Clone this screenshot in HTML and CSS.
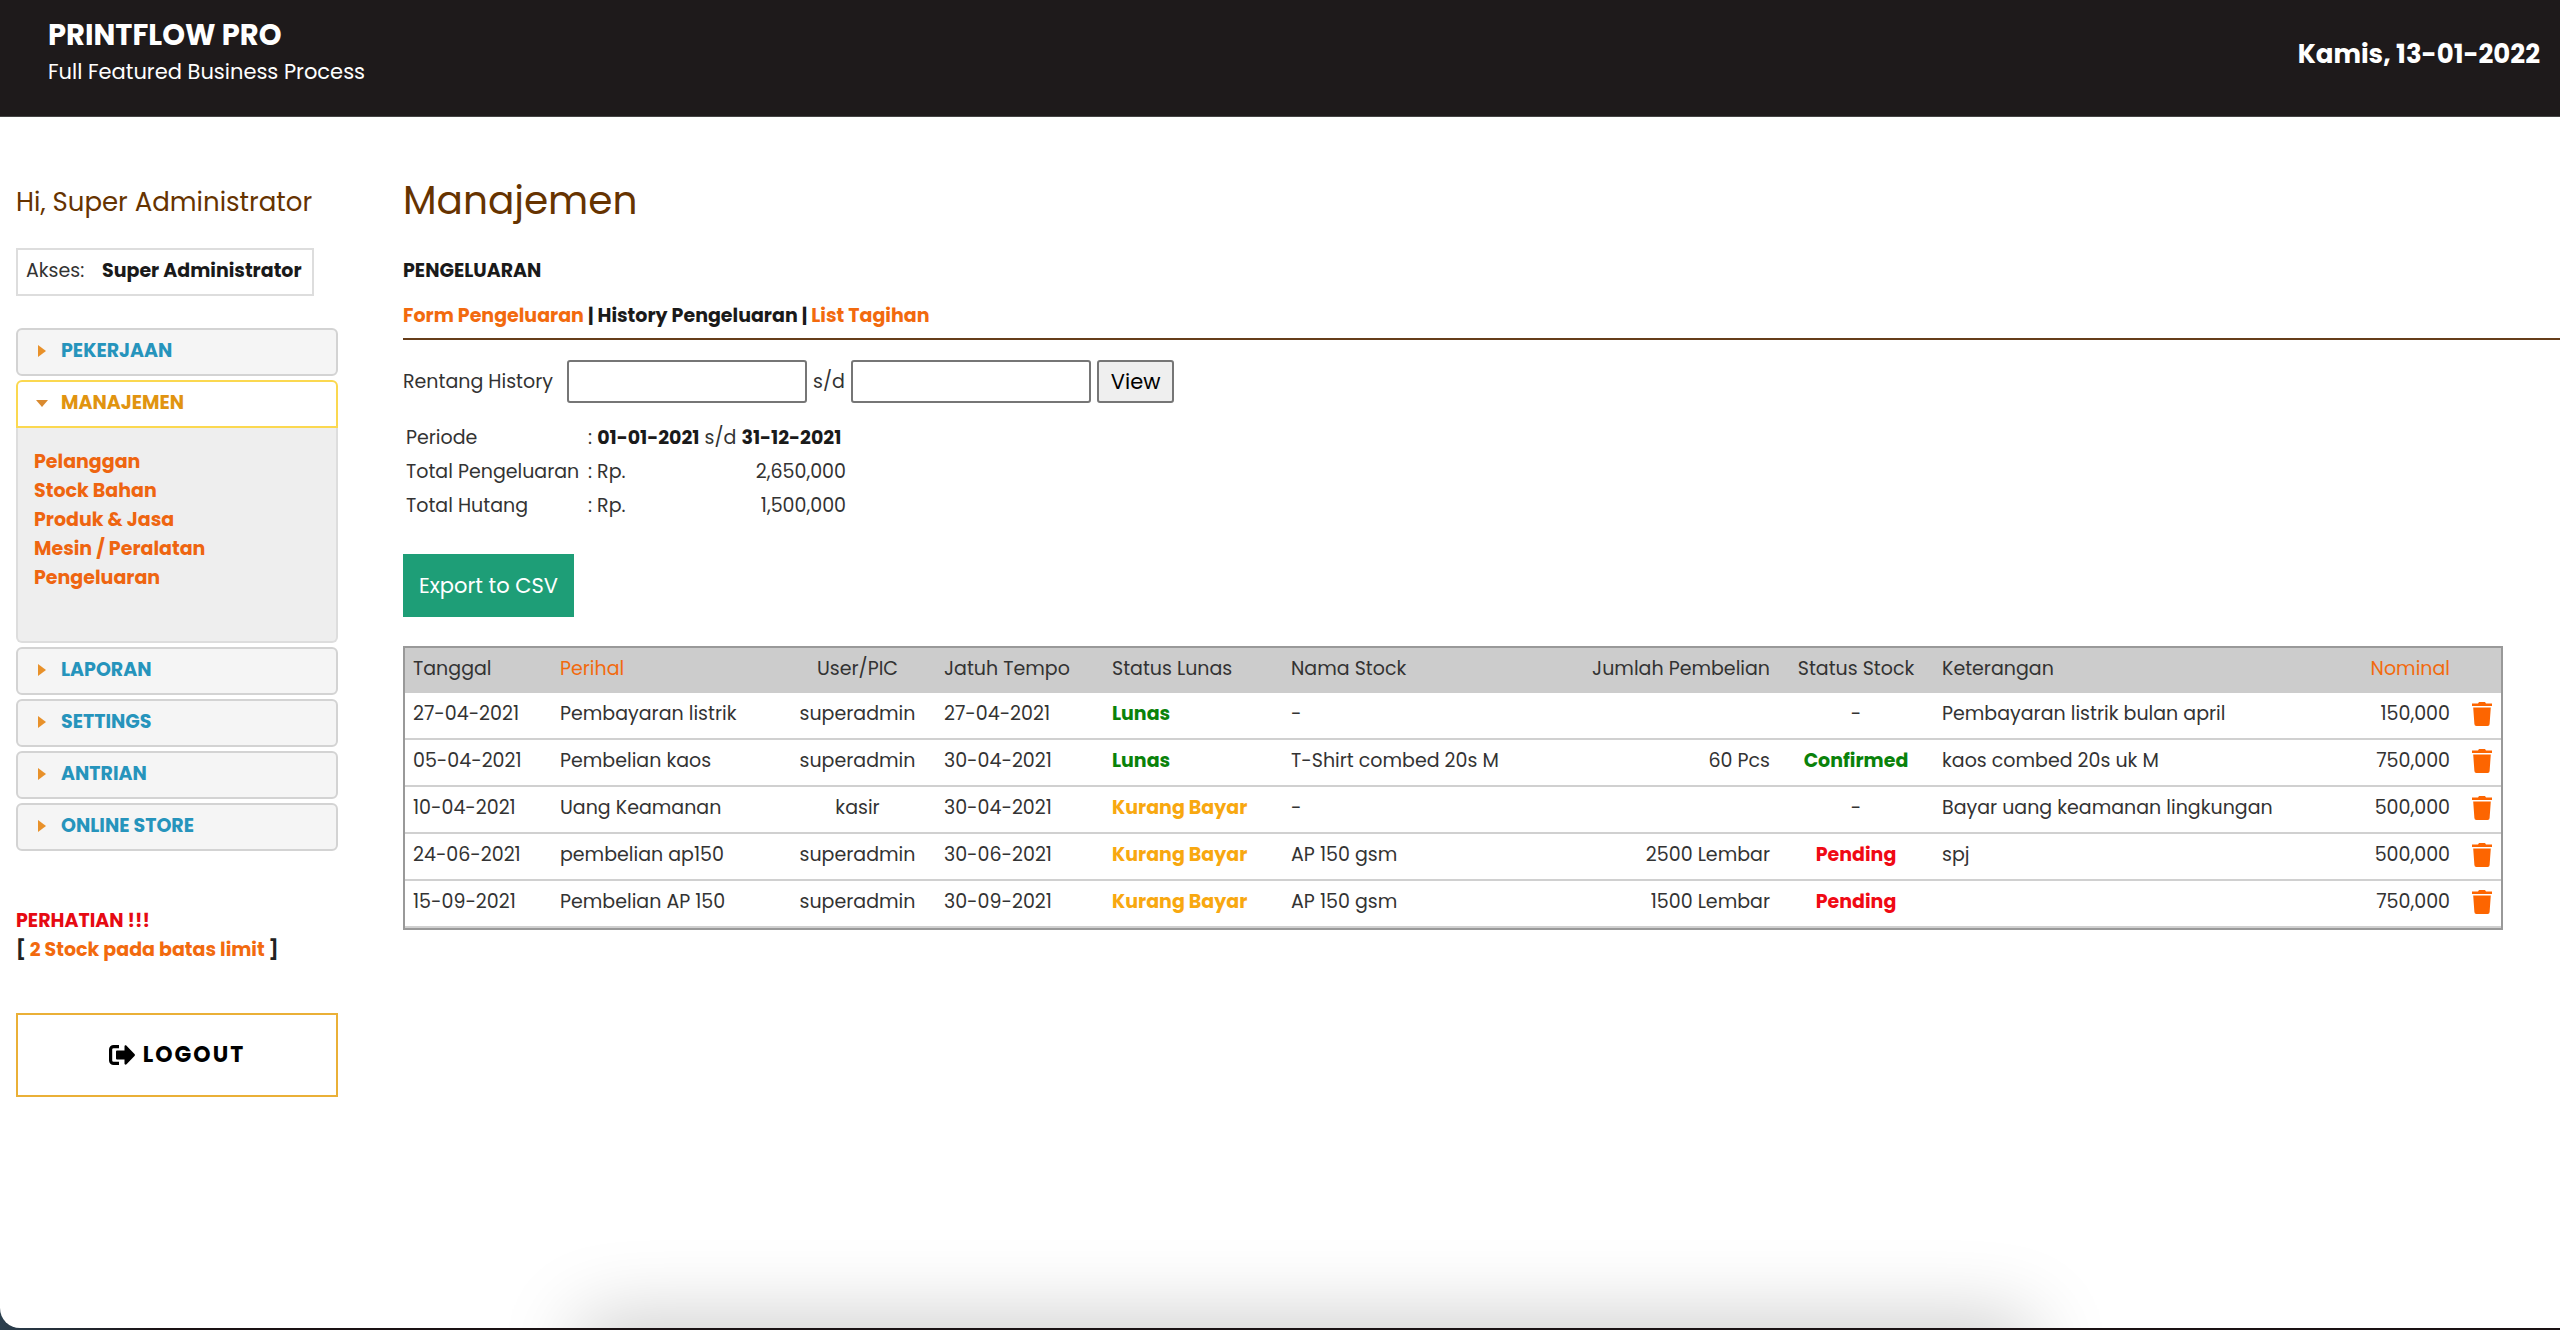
FILE: index.html
```html
<!DOCTYPE html>
<html lang="id">
<head>
<meta charset="utf-8">
<meta name="viewport" content="width=device-width, initial-scale=1">
<title>PrintFlow Pro - Pengeluaran</title>
<link rel="stylesheet" href="styles.css">
</head>
<body>
<svg class="sprite" aria-hidden="true">
  <symbol id="trash" viewBox="0 0 20 24">
    <path d="M0 1.500h6L7 0h6l1 1.500h6V4H0zM1.200 5.500h17.600l-1.200 16.500a2 2 0 0 1-2 2H4.400a2 2 0 0 1-2-2z"/>
  </symbol>
</svg>
<div class="page">
  <header class="topbar">
    <div>
      <div class="brand">PRINTFLOW PRO</div>
      <div class="tagline">Full Featured Business Process</div>
    </div>
    <div class="date">Kamis, 13-01-2022</div>
  </header>

  <div class="layout">
    <aside class="sidebar">
      <p class="greeting">Hi, Super Administrator</p>
      <div class="access"><span>Akses:</span><b>Super Administrator</b></div>

      <nav class="accordion">
        <button class="acc-head" type="button"><i class="caret"></i>PEKERJAAN</button>
        <div class="acc-group">
          <button class="acc-head open" type="button" aria-expanded="true"><i class="caret"></i>MANAJEMEN</button>
          <div class="acc-panel">
            <a href="#">Pelanggan</a>
            <a href="#">Stock Bahan</a>
            <a href="#">Produk &amp; Jasa</a>
            <a href="#">Mesin / Peralatan</a>
            <a href="#">Pengeluaran</a>
          </div>
        </div>
        <button class="acc-head" type="button"><i class="caret"></i>LAPORAN</button>
        <button class="acc-head" type="button"><i class="caret"></i>SETTINGS</button>
        <button class="acc-head" type="button"><i class="caret"></i>ANTRIAN</button>
        <button class="acc-head" type="button"><i class="caret"></i>ONLINE STORE</button>
      </nav>

      <div class="notice">
        <div class="alert">PERHATIAN !!!</div>
        <div>[ <a href="#">2 Stock pada batas limit</a> ]</div>
      </div>

      <button class="logout" type="button">
        <svg width="26" height="20" viewBox="0 0 26 20" aria-hidden="true">
          <path d="M10 1.600H4.600A3 3 0 0 0 1.600 4.600v10.800a3 3 0 0 0 3 3H10" fill="none" stroke="currentColor" stroke-width="3.200"/>
          <path d="M8 5.500h7.500V1.500c0-1.200 1.200-1.500 2-.800l8 8.200c.600.700.600 1.500 0 2.200l-8 8.200c-.800.700-2 .400-2-.800V14.500H8a1 1 0 0 1-1-1v-7a1 1 0 0 1 1-1z" fill="currentColor"/>
        </svg>
        LOGOUT
      </button>
    </aside>

    <main class="main">
      <h1>Manajemen</h1>
      <h2>PENGELUARAN</h2>
      <nav class="tabs"><a href="#">Form Pengeluaran</a> | History Pengeluaran | <a href="#">List Tagihan</a></nav>

      <form class="range">
        <label for="from">Rentang History</label>
        <input id="from" type="text">
        <label for="to">s/d</label>
        <input id="to" type="text">
        <button type="button">View</button>
      </form>

      <dl class="summary">
        <dt>Periode</dt><dd><span>: <b>01-01-2021</b> s/d <b>31-12-2021</b></span></dd>
        <dt>Total Pengeluaran</dt><dd><span>: Rp.</span><span>2,650,000</span></dd>
        <dt>Total Hutang</dt><dd><span>: Rp.</span><span>1,500,000</span></dd>
      </dl>

      <button class="export" type="button">Export to CSV</button>

      <table class="history">
        <colgroup>
          <col class="c-date"><col class="c-subject"><col class="c-user"><col class="c-due"><col class="c-paid">
          <col class="c-stock"><col class="c-qty"><col class="c-state"><col><col class="c-amount"><col class="c-action">
        </colgroup>
        <thead>
          <tr><th>Tanggal</th><th><a href="#">Perihal</a></th><th class="mid">User/PIC</th><th>Jatuh Tempo</th><th>Status Lunas</th><th>Nama Stock</th><th class="end">Jumlah Pembelian</th><th class="mid">Status Stock</th><th>Keterangan</th><th class="end"><a href="#">Nominal</a></th><th></th></tr>
        </thead>
        <tbody>
          <tr><td>27-04-2021</td><td>Pembayaran listrik</td><td class="mid">superadmin</td><td>27-04-2021</td><td class="ok">Lunas</td><td>-</td><td class="end"></td><td class="mid">-</td><td>Pembayaran listrik bulan april</td><td class="end">150,000</td><td class="act"><button type="button" aria-label="Hapus"><svg><use href="#trash"/></svg></button></td></tr>
          <tr><td>05-04-2021</td><td>Pembelian kaos</td><td class="mid">superadmin</td><td>30-04-2021</td><td class="ok">Lunas</td><td>T-Shirt combed 20s M</td><td class="end">60 Pcs</td><td class="mid ok">Confirmed</td><td>kaos combed 20s uk M</td><td class="end">750,000</td><td class="act"><button type="button" aria-label="Hapus"><svg><use href="#trash"/></svg></button></td></tr>
          <tr><td>10-04-2021</td><td>Uang Keamanan</td><td class="mid">kasir</td><td>30-04-2021</td><td class="due">Kurang Bayar</td><td>-</td><td class="end"></td><td class="mid">-</td><td>Bayar uang keamanan lingkungan</td><td class="end">500,000</td><td class="act"><button type="button" aria-label="Hapus"><svg><use href="#trash"/></svg></button></td></tr>
          <tr><td>24-06-2021</td><td>pembelian ap150</td><td class="mid">superadmin</td><td>30-06-2021</td><td class="due">Kurang Bayar</td><td>AP 150 gsm</td><td class="end">2500 Lembar</td><td class="mid wait">Pending</td><td>spj</td><td class="end">500,000</td><td class="act"><button type="button" aria-label="Hapus"><svg><use href="#trash"/></svg></button></td></tr>
          <tr><td>15-09-2021</td><td>Pembelian AP 150</td><td class="mid">superadmin</td><td>30-09-2021</td><td class="due">Kurang Bayar</td><td>AP 150 gsm</td><td class="end">1500 Lembar</td><td class="mid wait">Pending</td><td></td><td class="end">750,000</td><td class="act"><button type="button" aria-label="Hapus"><svg><use href="#trash"/></svg></button></td></tr>
        </tbody>
      </table>
    </main>
  </div>
</div>
</body>
</html>
```
FILE: styles.css
```css
* { box-sizing: border-box; }

body {
  margin: 0;
  background: linear-gradient(to right, #2b3f4e, #1a1214 160px);
  color: #333;
  font: 19px/28px Poppins, Inter, "Liberation Sans", sans-serif;
}

button, input { font: inherit; color: inherit; }
button { cursor: pointer; }
a { color: #f26a0e; text-decoration: none; }
b { color: #1a1a1a; }
.sprite { display: none; }

.page {
  position: relative;
  min-height: calc(100vh - 2px);
  overflow: hidden;
  background: #fff;
  border-bottom-left-radius: 20px;
}

/* Soft shadow rising from the lower edge of the window */
.page::after {
  content: "";
  position: absolute;
  top: 100%;
  left: 23%;
  right: 21%;
  height: 60px;
  box-shadow: 0 0 80px 8px rgba(0, 0, 0, .22);
}

.topbar {
  display: flex;
  justify-content: space-between;
  align-items: flex-start;
  height: 117px;
  padding: 16px 20px 0 48px;
  border-bottom: 1px solid #444;
  background: #1e1a1b;
  color: #fff;
}
.brand { font-size: 29px; font-weight: 700; line-height: 38px; }
.tagline { font-size: 21px; line-height: 36px; }
.date { font-size: 26px; font-weight: 700; line-height: 76px; }

.layout {
  display: grid;
  grid-template-columns: 322px 1fr;
  column-gap: 65px;
  padding: 60px 0 60px 16px;
}

.greeting { margin: 0; color: #663300; font-size: 26px; line-height: 50px; }

.access {
  display: inline-flex;
  gap: 15px;
  height: 48px;
  margin-top: 21px;
  padding: 7px 10px 7px 8px;
  border: 2px solid #ddd;
}
.access span { min-width: 61px; }

.accordion { display: flex; flex-direction: column; gap: 4px; margin-top: 32px; font-weight: 700; }
.acc-head {
  display: flex;
  align-items: center;
  width: 100%;
  height: 48px;
  padding: 0 20px 2px;
  border: 2px solid #d3d3d3;
  border-radius: 6px;
  background: #f5f5f5;
  color: #2694bc;
  font-weight: 700;
}
.acc-head.open { border-color: #fbd850; border-radius: 6px 6px 0 0; background: #fff; color: #e19410; }
.caret {
  width: 8px;
  margin-right: 15px;
  border: 6px solid transparent;
  border-left: 8px solid #e8912a;
  border-right: 0;
}
.open .caret {
  width: 12px;
  margin: 0 13px 0 -2px;
  border: 6px solid transparent;
  border-top: 7px solid #d98a30;
  border-bottom: 0;
}
.acc-panel {
  display: flex;
  flex-direction: column;
  height: 215px;
  padding: 19px 16px;
  border: 2px solid #ddd;
  border-top: 0;
  border-radius: 0 0 6px 6px;
  background: #eee;
  line-height: 29px;
}
.acc-panel a { color: #ee6510; }

.notice { margin-top: 55px; color: #222; font-weight: 700; line-height: 29px; }
.alert { color: #e60a12; }

.logout {
  display: flex;
  align-items: center;
  justify-content: center;
  gap: 8px;
  width: 100%;
  height: 84px;
  margin-top: 49px;
  border: 2px solid #eab037;
  background: #fff;
  color: #000;
  font-size: 22px;
  font-weight: 700;
  letter-spacing: 2px;
}

h1 { margin: 0; color: #663300; font-size: 39px; font-weight: 400; line-height: 48px; }
h2 { margin: 32px 0 0; color: #1a1a1a; font-size: 19px; line-height: 28px; }

.tabs {
  margin-top: 17px;
  padding-bottom: 8px;
  border-bottom: 2px solid #663d1a;
  color: #1a1a1a;
  font-weight: 700;
}

.range { display: flex; align-items: center; gap: 6px; margin-top: 20px; }
.range label:first-child { width: 158px; }
.range input { width: 240px; height: 43px; border: 2px solid #767676; border-radius: 3px; background: #fff; }
.range button {
  height: 43px;
  padding: 0 12px;
  border: 2px solid #767676;
  border-radius: 3px;
  background: #efefef;
  color: #000;
  font-size: 21px;
}

.summary {
  display: grid;
  grid-template-columns: 182px 258px;
  margin: 18px 0 0 3px;
  line-height: 34px;
  white-space: nowrap;
}
.summary dd { display: flex; justify-content: space-between; margin: 0; }

.export {
  display: block;
  height: 63px;
  margin-top: 31px;
  padding: 0 16px;
  border: 0;
  background: #1e9e77;
  color: #fff;
  font-size: 21px;
}

.history {
  width: calc(100% - 57px);
  margin-top: 29px;
  border: 2px solid #999;
  border-spacing: 0;
  table-layout: fixed;
}
.history th, .history td { height: 47px; padding: 0 9px 4px 8px; text-align: left; font-weight: 400; white-space: nowrap; }
.history th { height: 45px; background: #ccc; }
.history td { border-bottom: 2px solid #d0d0d0; }
.history .mid { text-align: center; }
.history .end { text-align: right; }
.history .ok, .history .due, .history .wait { font-weight: 700; }
.history .ok { color: #0a820a; }
.history .due { color: #f8a810; }
.history .wait { color: #f00a14; }
.c-date { width: 147px; }
.c-subject { width: 228px; }
.c-user { width: 156px; }
.c-due { width: 168px; }
.c-paid { width: 179px; }
.c-stock { width: 288px; }
.c-qty { width: 208px; }
.c-state { width: 155px; }
.c-amount { width: 140px; }
.c-action { width: 42px; }

.history .act { padding: 0 0 4px; }
.act button { display: block; padding: 0 0 0 13px; border: 0; background: none; }
.act svg { display: block; width: 20px; height: 24px; fill: #fd6500; }
```
